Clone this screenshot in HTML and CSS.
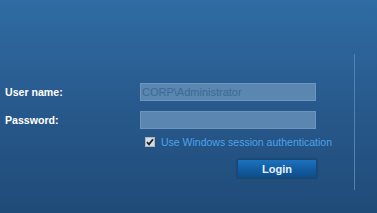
FILE: index.html
```html
<!DOCTYPE html>
<html>
<head>
<meta charset="utf-8">
<link rel="stylesheet" href="styles.css">
</head>
<body>
<div class="panel">
  <div class="form">
    <div class="row">
      <label class="lbl">User name:</label>
      <div class="field"><span class="value">CORP\Administrator</span></div>
    </div>
    <div class="row">
      <label class="lbl">Password:</label>
      <div class="field"></div>
    </div>
    <div class="row check-row">
      <span class="lbl"></span>
      <div class="check">
        <span class="box"><svg width="8" height="8" viewBox="0 0 8 8"><path d="M1 4.2 L3 6.4 L7 1.2" fill="none" stroke="#222" stroke-width="1.8"/></svg></span>
        <span class="check-text">Use Windows session authentication</span>
      </div>
    </div>
    <div class="btn-row">
      <button class="btn">Login</button>
    </div>
  </div>
</div>
</body>
</html>
```

FILE: styles.css
```css
html, body {
  margin: 0;
  padding: 0;
  height: 100%;
}
body {
  background: linear-gradient(to bottom, #2f6ca3 0%, #28598c 50%, #1f4b78 100%);
  font-family: "Liberation Sans", Arial, sans-serif;
  font-size: 11px;
  overflow: hidden;
}
.panel {
  margin-top: 54px;
  width: 354px;
  height: 136px;
  border-right: 1px solid #5083b4;
  box-sizing: content-box;
}
.form {
  padding-top: 29px;
  display: flex;
  flex-direction: column;
}
.row {
  display: grid;
  grid-template-columns: 140px 176px;
  align-items: center;
  height: 18px;
  margin-bottom: 10px;
}
.lbl {
  padding-left: 5px;
  color: #ffffff;
  font-weight: bold;
  font-size: 10.6px;
}
.field {
  height: 18px;
  box-sizing: border-box;
  background: #5a86b0;
  border: 1px solid #6d95bd;
  display: flex;
  align-items: center;
  padding-left: 1px;
}
.value {
  color: #3d6a96;
  font-size: 11px;
}
.check-row {
  height: 10px;
  margin-top: -3px;
  margin-bottom: 0;
  grid-template-columns: 145px auto;
}
.check {
  display: flex;
  align-items: center;
}
.box {
  width: 10px;
  height: 10px;
  box-sizing: border-box;
  background: #d8dde3;
  border: 1px solid #a9b6c4;
  display: flex;
  align-items: center;
  justify-content: center;
}
.check-text {
  margin-left: 6px;
  color: #4da3ea;
  font-size: 10.5px;
}
.btn-row {
  display: flex;
  padding-left: 237px;
  margin-top: 13px;
}
.btn {
  width: 80px;
  height: 19px;
  border: 1px solid #15497c;
  background: linear-gradient(to bottom, #1c72bd 0%, #115a9f 60%, #0e4f8c 100%);
  color: #e8f2fb;
  font-family: "Liberation Sans", Arial, sans-serif;
  font-weight: bold;
  font-size: 11px;
  padding: 0;
  box-shadow: 0 0 2px rgba(0,0,0,0.35);
}
```
